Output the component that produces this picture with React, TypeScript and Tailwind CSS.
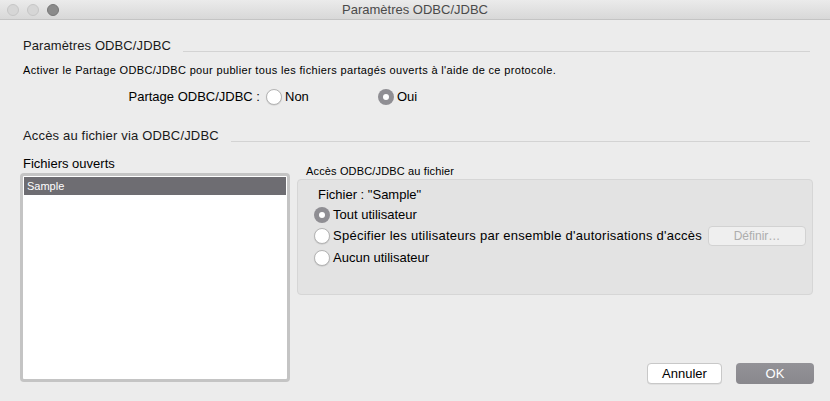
import React from 'react';

function Radio({ checked }: { checked?: boolean }) {
  if (checked) {
    return (
      <span className="flex h-[16px] w-[16px] shrink-0 items-center justify-center rounded-full bg-[#8f8e93]">
        <span className="h-[6px] w-[6px] rounded-full bg-white" />
      </span>
    );
  }
  return (
    <span className="h-[16px] w-[16px] shrink-0 rounded-full border border-[#b4b4b4] bg-white shadow-[0_0.5px_1px_rgba(0,0,0,0.15)]" />
  );
}

function SectionTitle({ children, track }: { children: React.ReactNode; track: string }) {
  return (
    <div className="flex items-end pr-[20px]">
      <span className={`text-[13px] leading-[16px] text-[#1a1a1a] ${track}`}>{children}</span>
      <span className="mb-[2px] ml-[12px] h-px flex-1 bg-[#d3d3d3]" />
    </div>
  );
}

export default function App() {
  return (
    <div
      className="flex h-[401px] w-[830px] flex-col overflow-hidden bg-[#ececec] text-black"
      style={{ fontFamily: '"Liberation Sans", Arial, sans-serif' }}
    >
      {/* title bar */}
      <div className="relative flex h-[20px] items-center border-b border-[#c4c4c4] bg-gradient-to-b from-[#ebebeb] to-[#d8d8d8]">
        <div className="flex items-center gap-[8px] pl-[7px]">
          <span className="h-[12px] w-[12px] rounded-full border border-[#c6c6c6] bg-[#d6d6d6]" />
          <span className="h-[12px] w-[12px] rounded-full border border-[#c6c6c6] bg-[#d6d6d6]" />
          <span className="h-[12px] w-[12px] rounded-full border border-[#777] bg-[#8b8b8b]" />
        </div>
        <span className="absolute inset-x-0 text-center text-[13px] leading-[20px] text-[#4a4a4a]">
          Paramètres ODBC/JDBC
        </span>
      </div>

      <div className="flex flex-1 flex-col pl-[23px]">
        <div className="mt-[18px]">
          <SectionTitle track="tracking-[0.1px]">Paramètres ODBC/JDBC</SectionTitle>
        </div>
        <p className="mt-[9px] text-[11px] leading-[14px] tracking-[0.35px]">
          Activer le Partage ODBC/JDBC pour publier tous les fichiers partagés ouverts à l'aide de ce protocole.
        </p>

        <div className="mt-[11px] flex h-[18px] items-center text-[13px]">
          <span className="w-[243px] pr-[6px] text-right">Partage ODBC/JDBC :</span>
          <span className="flex w-[112px] items-center gap-[3px]">
            <Radio />
            <span>Non</span>
          </span>
          <span className="flex items-center gap-[3px]">
            <Radio checked />
            <span>Oui</span>
          </span>
        </div>

        <div className="mt-[22px]">
          <SectionTitle track="tracking-[0.17px]">Accès au fichier via ODBC/JDBC</SectionTitle>
        </div>

        <div className="ml-[-3px] mt-[12px] flex gap-[7px]">
          {/* open files */}
          <div className="flex w-[270px] flex-col">
            <span className="pl-[3px] text-[13px] leading-[16px]">Fichiers ouverts</span>
            <div className="mt-[1px] h-[209px] rounded-[4px] border-[3px] border-[#c4c4c4] bg-white p-px">
              <div className="flex h-[18px] items-center bg-[#6e6d72] pl-[3px] text-[11px] text-white">Sample</div>
            </div>
          </div>

          {/* file access */}
          <div className="flex w-[516px] flex-col pt-[8px]">
            <span className="pl-[9px] text-[11px] leading-[14px] tracking-[0.15px]">Accès ODBC/JDBC au fichier</span>
            <div className="mt-[1px] flex h-[116px] flex-col rounded-[4px] border border-[#d6d6d6] bg-[#e3e3e3] pl-[16px] pr-[6px] pt-[6px] text-[13px]">
              <span className="pl-[4px] leading-[18px]">Fichier : "Sample"</span>
              <div className="flex h-[21px] items-center gap-[3px]">
                <Radio checked />
                <span>Tout utilisateur</span>
              </div>
              <div className="flex h-[22px] items-center gap-[3px]">
                <Radio />
                <span className="flex-1 whitespace-nowrap tracking-[0.25px]">
                  Spécifier les utilisateurs par ensemble d'autorisations d'accès
                </span>
                <span className="flex h-[20px] w-[98px] shrink-0 items-center justify-center rounded-[4px] border border-[#d2d2d2] bg-[#efefef] text-[12px] text-[#adadad]">
                  Définir…
                </span>
              </div>
              <div className="flex h-[21px] items-center gap-[3px]">
                <Radio />
                <span>Aucun utilisateur</span>
              </div>
            </div>

            <div className="mt-[68px] flex justify-end gap-[14px]">
              <span className="flex h-[21px] w-[75px] items-center justify-center rounded-[4px] border border-[#c8c8c8] bg-white text-[13px] shadow-[0_0.5px_0.5px_rgba(0,0,0,0.1)]">
                Annuler
              </span>
              <span className="mr-[-1px] flex h-[21px] w-[78px] items-center justify-center rounded-[4px] bg-gradient-to-b from-[#939297] to-[#89888d] text-[13px] text-white">
                OK
              </span>
            </div>
          </div>
        </div>
      </div>
    </div>
  );
}
